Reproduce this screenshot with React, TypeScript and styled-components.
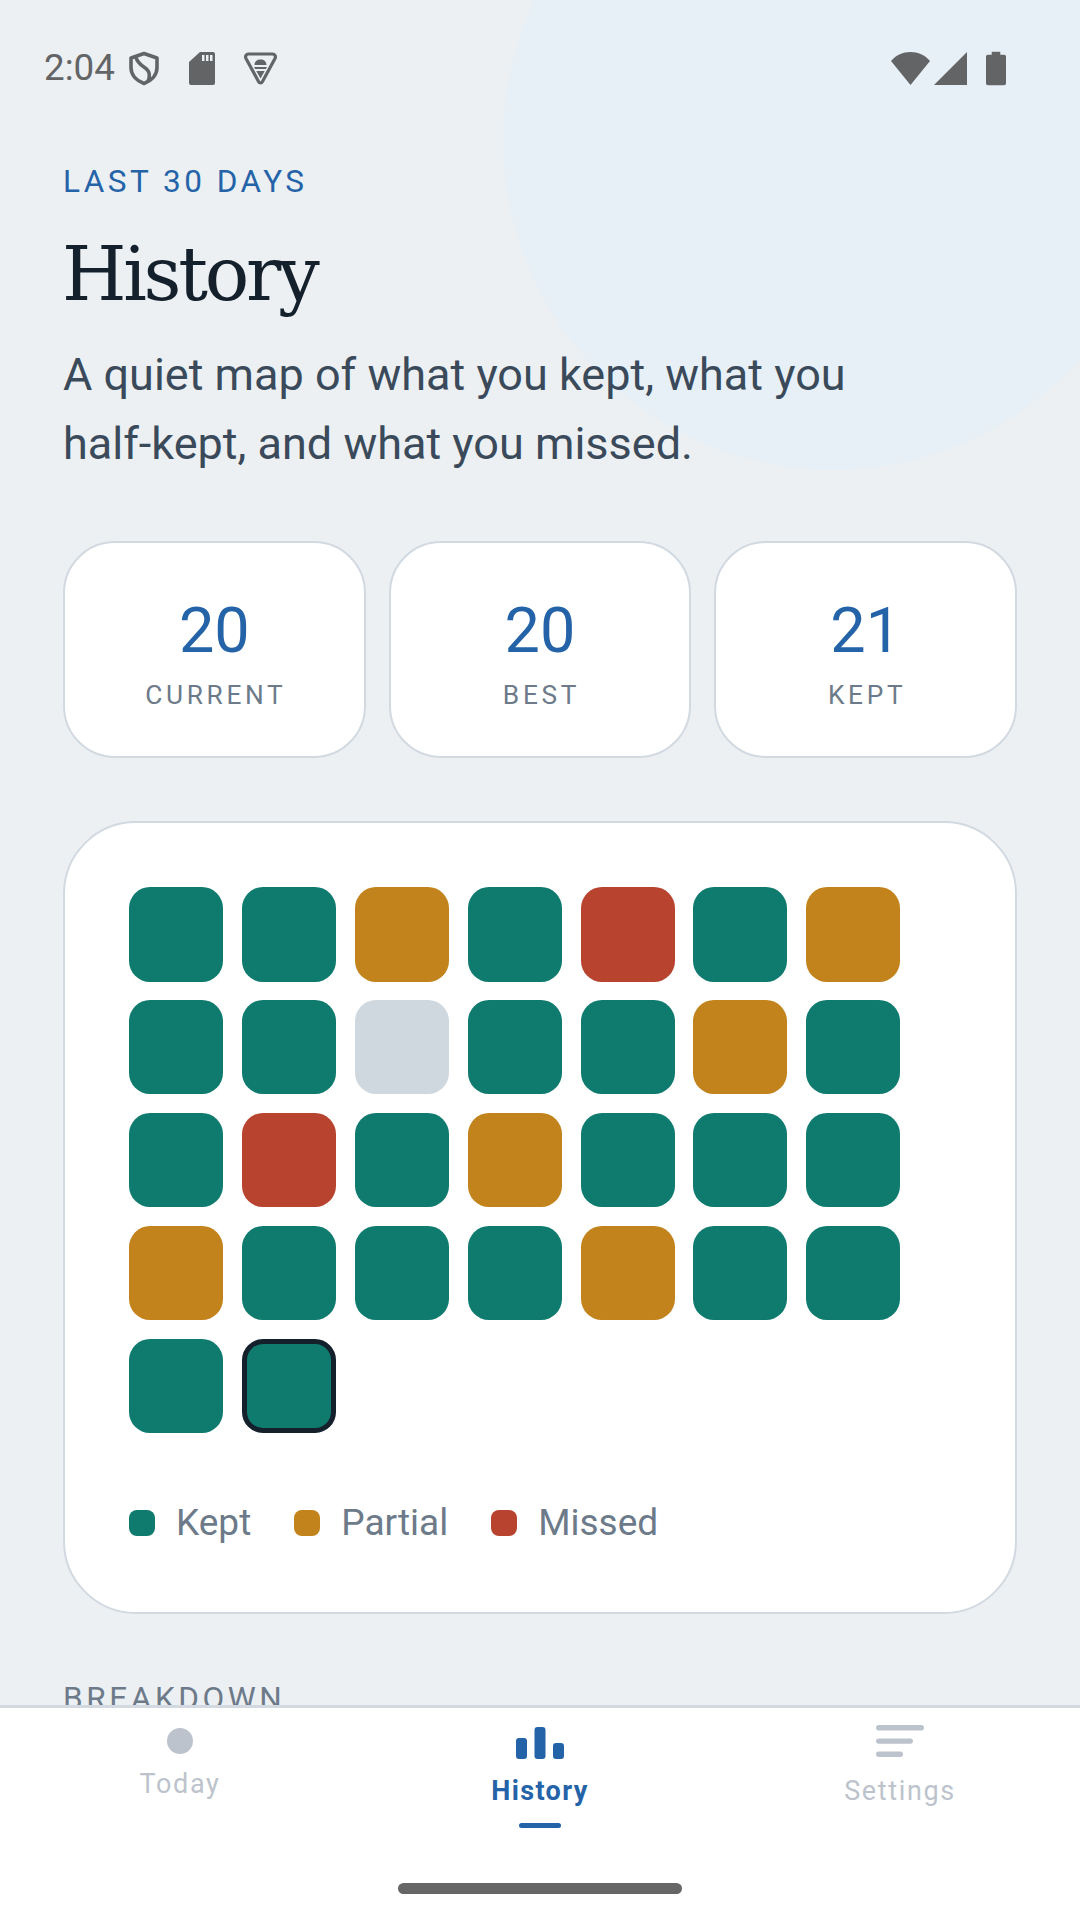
import React from 'react';
import styled, { createGlobalStyle } from 'styled-components';

const COLORS = {
  BG: '#ecf0f3',
  BLOB: '#e8f0f7',
  BORDER: '#d2d9e1',
  INK: '#14202b',
  BODY: '#3a4a5a',
  MUTED: '#6c7a89',
  BLUE: '#2563a8',
  FAINT: '#bcc3cc',
  STATUS: '#636466',
  KEPT: '#0f7a6e',
  PARTIAL: '#c2831c',
  MISSED: '#b8432f',
  EMPTY: '#d0d8df',
};

type DayStatus = 'kept' | 'partial' | 'missed' | 'empty';

const STATUS_COLOR: Record<DayStatus, string> = {
  kept: COLORS.KEPT,
  partial: COLORS.PARTIAL,
  missed: COLORS.MISSED,
  empty: COLORS.EMPTY,
};

const GlobalStyle = createGlobalStyle`
  html, body {
    margin: 0;
    padding: 0;
    background: ${COLORS.BG};
  }
  * {
    box-sizing: border-box;
  }
`;

const Screen = styled.div`
  position: relative;
  width: 1080px;
  height: 1920px;
  display: flex;
  flex-direction: column;
  overflow: hidden;
  background: ${COLORS.BG};
  font-family: Roboto, 'Noto Sans', sans-serif;
`;

const Blob = styled.div`
  position: absolute;
  top: -190px;
  left: 503px;
  width: 660px;
  height: 660px;
  border-radius: 50%;
  background: ${COLORS.BLOB};
`;

const StatusBar = styled.div`
  position: relative;
  display: flex;
  align-items: center;
  justify-content: space-between;
  height: 136px;
  padding: 0 74px 0 44px;
  color: ${COLORS.STATUS};
`;

const StatusLeft = styled.div`
  display: flex;
  align-items: center;
`;

const Time = styled.span`
  width: 71px;
  font-size: 36.75px;
  line-height: 1;
`;

const StatusSlot = styled.span`
  display: flex;
  justify-content: center;
  width: 58px;
`;

const StatusRight = styled.div`
  display: flex;
  align-items: center;
  gap: 4px;
`;

const BatterySlot = styled.span`
  display: flex;
  margin-left: 15px;
`;

const Main = styled.main`
  position: relative;
  flex: 1;
  min-height: 0;
  overflow: hidden;
  padding: 27px 63px 0;
`;

const Eyebrow = styled.div`
  font-size: 31.5px;
  line-height: 38px;
  letter-spacing: 3.5px;
  color: ${COLORS.BLUE};
`;

const Title = styled.h1`
  margin: 23px 0 0 -1px;
  font-family: 'DejaVu Serif', 'Liberation Serif', serif;
  font-size: 74px;
  font-weight: 400;
  line-height: 100px;
  letter-spacing: -3.3px;
  color: ${COLORS.INK};
`;

const Intro = styled.p`
  margin: 16px 0 0;
  font-size: 45px;
  line-height: 69px;
  color: ${COLORS.BODY};
`;

const StatRow = styled.div`
  display: grid;
  grid-template-columns: repeat(3, 1fr);
  gap: 23px;
  margin-top: 63px;
`;

const StatCard = styled.div`
  display: flex;
  flex-direction: column;
  align-items: center;
  height: 217px;
  padding-top: 51px;
  background: #fff;
  border: 2.6px solid ${COLORS.BORDER};
  border-radius: 52px;
`;

const StatValue = styled.div`
  font-size: 63px;
  line-height: 74px;
  color: ${COLORS.BLUE};
`;

const StatLabel = styled.div`
  margin-top: 9.5px;
  padding-left: 3px;
  font-size: 26.25px;
  line-height: 34px;
  letter-spacing: 3.7px;
  color: ${COLORS.MUTED};
`;

const HistoryCard = styled.section`
  margin-top: 63px;
  padding: 64px 64px 67px;
  background: #fff;
  border: 2.6px solid ${COLORS.BORDER};
  border-radius: 73px;
`;

const DayGrid = styled.div`
  display: grid;
  grid-template-columns: repeat(7, 94px);
  grid-auto-rows: 94.5px;
  gap: 18.4px 18.9px;
`;

const DayCell = styled.div<{ $status: DayStatus; $today?: boolean }>`
  border-radius: 21px;
  background: ${({ $status }) => STATUS_COLOR[$status]};
  border: ${({ $today }) => ($today ? `5px solid ${COLORS.INK}` : 'none')};
`;

const Legend = styled.div`
  display: flex;
  align-items: center;
  gap: 43px;
  margin-top: 68px;
`;

const LegendItem = styled.div`
  display: flex;
  align-items: center;
  gap: 21px;
  font-size: 37px;
  line-height: 44px;
  color: ${COLORS.MUTED};
`;

const LegendDot = styled.span<{ $status: DayStatus }>`
  width: 26px;
  height: 26px;
  border-radius: 8px;
  background: ${({ $status }) => STATUS_COLOR[$status]};
`;

const SectionLabel = styled.h2`
  margin: 66px 0 0;
  font-size: 31.5px;
  font-weight: 400;
  line-height: 38px;
  letter-spacing: 3.6px;
  color: ${COLORS.MUTED};
`;

const Nav = styled.nav`
  position: relative;
  display: flex;
  flex-direction: column;
  height: 215px;
  background: #fff;
  border-top: 3px solid ${COLORS.BORDER};
`;

const Tabs = styled.div`
  flex: 1;
  display: grid;
  grid-template-columns: repeat(3, 1fr);
`;

const Tab = styled.div`
  display: flex;
  flex-direction: column;
  align-items: center;
  padding-top: 17px;
`;

const TabLabel = styled.span<{ $active?: boolean }>`
  margin-top: 14.5px;
  font-size: 27px;
  line-height: 34px;
  letter-spacing: ${({ $active }) => ($active ? '0.05em' : '0.06em')};
  font-weight: ${({ $active }) => ($active ? 700 : 400)};
  color: ${({ $active }) => ($active ? COLORS.BLUE : COLORS.FAINT)};
`;

const TabMarker = styled.span`
  width: 42px;
  height: 5px;
  margin-top: 15.5px;
  border-radius: 3px;
  background: ${COLORS.BLUE};
`;

const HomeIndicator = styled.div`
  align-self: center;
  width: 284px;
  height: 11px;
  margin-bottom: 26px;
  border-radius: 6px;
  background: #666666;
`;

const DAYS: DayStatus[] = [
  'kept', 'kept', 'partial', 'kept', 'missed', 'kept', 'partial',
  'kept', 'kept', 'empty', 'kept', 'kept', 'partial', 'kept',
  'kept', 'missed', 'kept', 'partial', 'kept', 'kept', 'kept',
  'partial', 'kept', 'kept', 'kept', 'partial', 'kept', 'kept',
  'kept', 'kept',
];

const STATS = [
  { value: '20', label: 'CURRENT' },
  { value: '20', label: 'BEST' },
  { value: '21', label: 'KEPT' },
];

const LEGEND: { status: DayStatus; label: string }[] = [
  { status: 'kept', label: 'Kept' },
  { status: 'partial', label: 'Partial' },
  { status: 'missed', label: 'Missed' },
];

const ShieldIcon = () => (
  <svg width="30" height="35" viewBox="0 0 30 34" fill="none" stroke={COLORS.STATUS} strokeWidth="3.6">
    <path d="M15 2 L28 6.5 V16 C28 24 22 29.5 15 32 C8 29.5 2 24 2 16 V6.5 Z" strokeLinejoin="round" />
    <path d="M7 6 C9 13 14 14 18 18 C21 21 21 25 19 30" />
  </svg>
);

const SdCardIcon = () => (
  <svg width="26" height="33" viewBox="0 0 26 33" fill={COLORS.STATUS}>
    <path d="M11 0 H24 A2 2 0 0 1 26 2 V31 A2 2 0 0 1 24 33 H2 A2 2 0 0 1 0 31 V10 Z M13 3 V9 H15.5 V3 Z M17 3 V9 H19.5 V3 Z M21 3 V9 H23.5 V3 Z" fillRule="evenodd" />
  </svg>
);

const AndroidIcon = () => (
  <svg width="35" height="33" viewBox="0 0 34 33" fill="none">
    <path d="M5 2 H29 C31.5 2 32.5 4.5 31.5 6.5 L19 29.5 C18 31.5 16 31.5 15 29.5 L2.5 6.5 C1.5 4.5 2.5 2 5 2 Z" stroke={COLORS.STATUS} strokeWidth="3.2" strokeLinejoin="round" />
    <path d="M11 13 C11 9.5 13.5 7.5 17 7.5 C20.5 7.5 23 9.5 23 13 Z M10.5 15 H23.5 L22.4 17 H11.6 Z M12.8 19 H21.2 L17 26.5 Z" fill={COLORS.STATUS} />
  </svg>
);

const WifiIcon = () => (
  <svg width="39" height="33" viewBox="0 0 39 33" fill={COLORS.STATUS}>
    <path d="M0 9 C5 3 12 0 19.5 0 C27 0 34 3 39 9 L19.5 33 Z" />
  </svg>
);

const SignalIcon = () => (
  <svg width="33" height="33" viewBox="0 0 33 33" fill={COLORS.STATUS}>
    <path d="M33 0 V33 H0 Z" />
  </svg>
);

const BatteryIcon = () => (
  <svg width="20" height="35" viewBox="0 0 21 35" fill={COLORS.STATUS}>
    <path d="M6 0 H15 V3 H19 A2 2 0 0 1 21 5 V33 A2 2 0 0 1 19 35 H2 A2 2 0 0 1 0 33 V5 A2 2 0 0 1 2 3 H6 Z" />
  </svg>
);

const TodayIcon = () => (
  <svg width="26" height="27" viewBox="0 0 26 27" fill={COLORS.FAINT} overflow="visible">
    <circle cx="13" cy="16" r="13" />
  </svg>
);

const HistoryIcon = () => (
  <svg width="48" height="34" viewBox="0 0 48 34" fill={COLORS.BLUE}>
    <rect x="0" y="13" width="11" height="21" rx="3" />
    <rect x="18.5" y="2" width="11" height="32" rx="3" />
    <rect x="37" y="18" width="11" height="16" rx="3" />
  </svg>
);

const SettingsIcon = () => (
  <svg width="48" height="34" viewBox="0 0 48 34" fill={COLORS.FAINT}>
    <rect x="0" y="0" width="48" height="5.4" rx="2.7" />
    <rect x="0" y="13.4" width="37" height="5.4" rx="2.7" />
    <rect x="0" y="26.6" width="27" height="5.4" rx="2.7" />
  </svg>
);

export default function App() {
  return (
    <Screen>
      <GlobalStyle />
      <Blob />
      <StatusBar>
        <StatusLeft>
          <Time>2:04</Time>
          <StatusSlot>
            <ShieldIcon />
          </StatusSlot>
          <StatusSlot>
            <SdCardIcon />
          </StatusSlot>
          <StatusSlot>
            <AndroidIcon />
          </StatusSlot>
        </StatusLeft>
        <StatusRight>
          <WifiIcon />
          <SignalIcon />
          <BatterySlot>
            <BatteryIcon />
          </BatterySlot>
        </StatusRight>
      </StatusBar>

      <Main>
        <Eyebrow>LAST 30 DAYS</Eyebrow>
        <Title>History</Title>
        <Intro>
          A quiet map of what you kept, what you
          <br />
          half-kept, and what you missed.
        </Intro>

        <StatRow>
          {STATS.map((stat) => (
            <StatCard key={stat.label}>
              <StatValue>{stat.value}</StatValue>
              <StatLabel>{stat.label}</StatLabel>
            </StatCard>
          ))}
        </StatRow>

        <HistoryCard>
          <DayGrid>
            {DAYS.map((status, i) => (
              <DayCell key={i} $status={status} $today={i === DAYS.length - 1} />
            ))}
          </DayGrid>
          <Legend>
            {LEGEND.map((item) => (
              <LegendItem key={item.status}>
                <LegendDot $status={item.status} />
                {item.label}
              </LegendItem>
            ))}
          </Legend>
        </HistoryCard>

        <SectionLabel>BREAKDOWN</SectionLabel>
      </Main>

      <Nav>
        <Tabs>
          <Tab>
            <TodayIcon />
            <TabLabel>Today</TabLabel>
          </Tab>
          <Tab>
            <HistoryIcon />
            <TabLabel $active>History</TabLabel>
            <TabMarker />
          </Tab>
          <Tab>
            <SettingsIcon />
            <TabLabel>Settings</TabLabel>
          </Tab>
        </Tabs>
        <HomeIndicator />
      </Nav>
    </Screen>
  );
}
